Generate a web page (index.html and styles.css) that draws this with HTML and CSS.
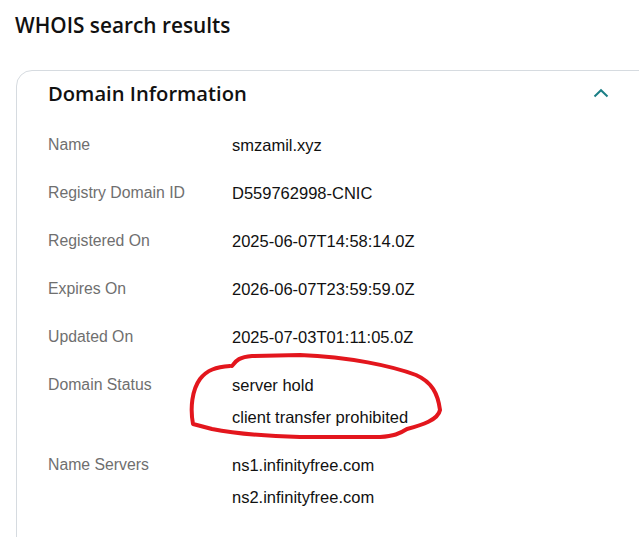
FILE: index.html
```html
<!DOCTYPE html>
<html lang="en">
<head>
<meta charset="utf-8">
<title>WHOIS search results</title>
<link rel="stylesheet" href="styles.css">
</head>
<body>
<main class="page">
  <h1 class="page-title">WHOIS search results</h1>
  <section class="card">
    <header class="card-head">
      <h2 class="card-title">Domain Information</h2>
      <svg class="chevron" width="16" height="10" viewBox="0 0 16 10" aria-hidden="true">
        <path d="M1.5 8.5 L8 2.2 L14.5 8.5" fill="none" stroke="#1b7f86" stroke-width="2"/>
      </svg>
    </header>
    <dl class="info">
      <div class="row"><dt>Name</dt><dd>smzamil.xyz</dd></div>
      <div class="row"><dt>Registry Domain ID</dt><dd>D559762998-CNIC</dd></div>
      <div class="row"><dt>Registered On</dt><dd>2025-06-07T14:58:14.0Z</dd></div>
      <div class="row"><dt>Expires On</dt><dd>2026-06-07T23:59:59.0Z</dd></div>
      <div class="row"><dt>Updated On</dt><dd>2025-07-03T01:11:05.0Z</dd></div>
      <div class="row"><dt>Domain Status</dt><dd><span>server hold</span><span>client transfer prohibited</span></dd></div>
      <div class="row"><dt>Name Servers</dt><dd><span>ns1.infinityfree.com</span><span>ns2.infinityfree.com</span></dd></div>
    </dl>
  </section>
  <svg class="scribble" width="639" height="537" viewBox="0 0 639 537" aria-hidden="true">
    <path d="M232 366 C236 360 240 357 252 356 L300 355 C350 357 392 366 416 375 C432 382 438 394 440 410 C438 420 422 425 407 429 C399 434 394 436 380 437 L300 437 C262 436 232 433 212 429 L193 424 C190 408 192 390 200 379 C207 370 216 367 230 366"
      fill="none" stroke="#e3161d" stroke-width="4" stroke-linecap="round" stroke-linejoin="round"/>
  </svg>
</main>
</body>
</html>
```

FILE: styles.css
```css
html, body {
  margin: 0;
  padding: 0;
  background: #ffffff;
  overflow: hidden;
}

.page {
  position: relative;
  padding: 12px 0 0 15px;
  font-family: "Liberation Sans", Arial, sans-serif;
  color: #111111;
  width: 100%;
  height: 537px;
  box-sizing: border-box;
  overflow: hidden;
}

.page-title {
  margin: 0 0 32px 0;
  font-family: "Open Sans", "Liberation Sans", sans-serif;
  font-size: 20.8px;
  line-height: 26px;
  font-weight: 600;
  color: #111111;
}

.card {
  margin-left: 1px;
  width: 660px;
  border: 1px solid #d6dbe0;
  border-radius: 16px;
  padding: 6px 52px 40px 31px;
  box-sizing: border-box;
}

.card-head {
  display: flex;
  align-items: center;
  justify-content: space-between;
  height: 32px;
  margin-bottom: 20px;
}

.card-title {
  margin: 0;
  font-family: "Open Sans", "Liberation Sans", sans-serif;
  font-size: 20.2px;
  font-weight: 600;
  line-height: 32px;
  color: #111111;
}

.chevron {
  display: block;
  margin-right: 14px;
}

.info {
  margin: 0;
  display: flex;
  flex-direction: column;
  gap: 16px;
}

.row {
  display: grid;
  grid-template-columns: 184px 1fr;
  font-size: 15.8px;
  line-height: 32px;
}

.row dt {
  color: #6f6f6f;
}

.row dd {
  margin: 0;
  color: #111111;
  font-size: 16.5px;
  display: flex;
  flex-direction: column;
}

.scribble {
  position: absolute;
  left: 0;
  top: 0;
  pointer-events: none;
}
```
